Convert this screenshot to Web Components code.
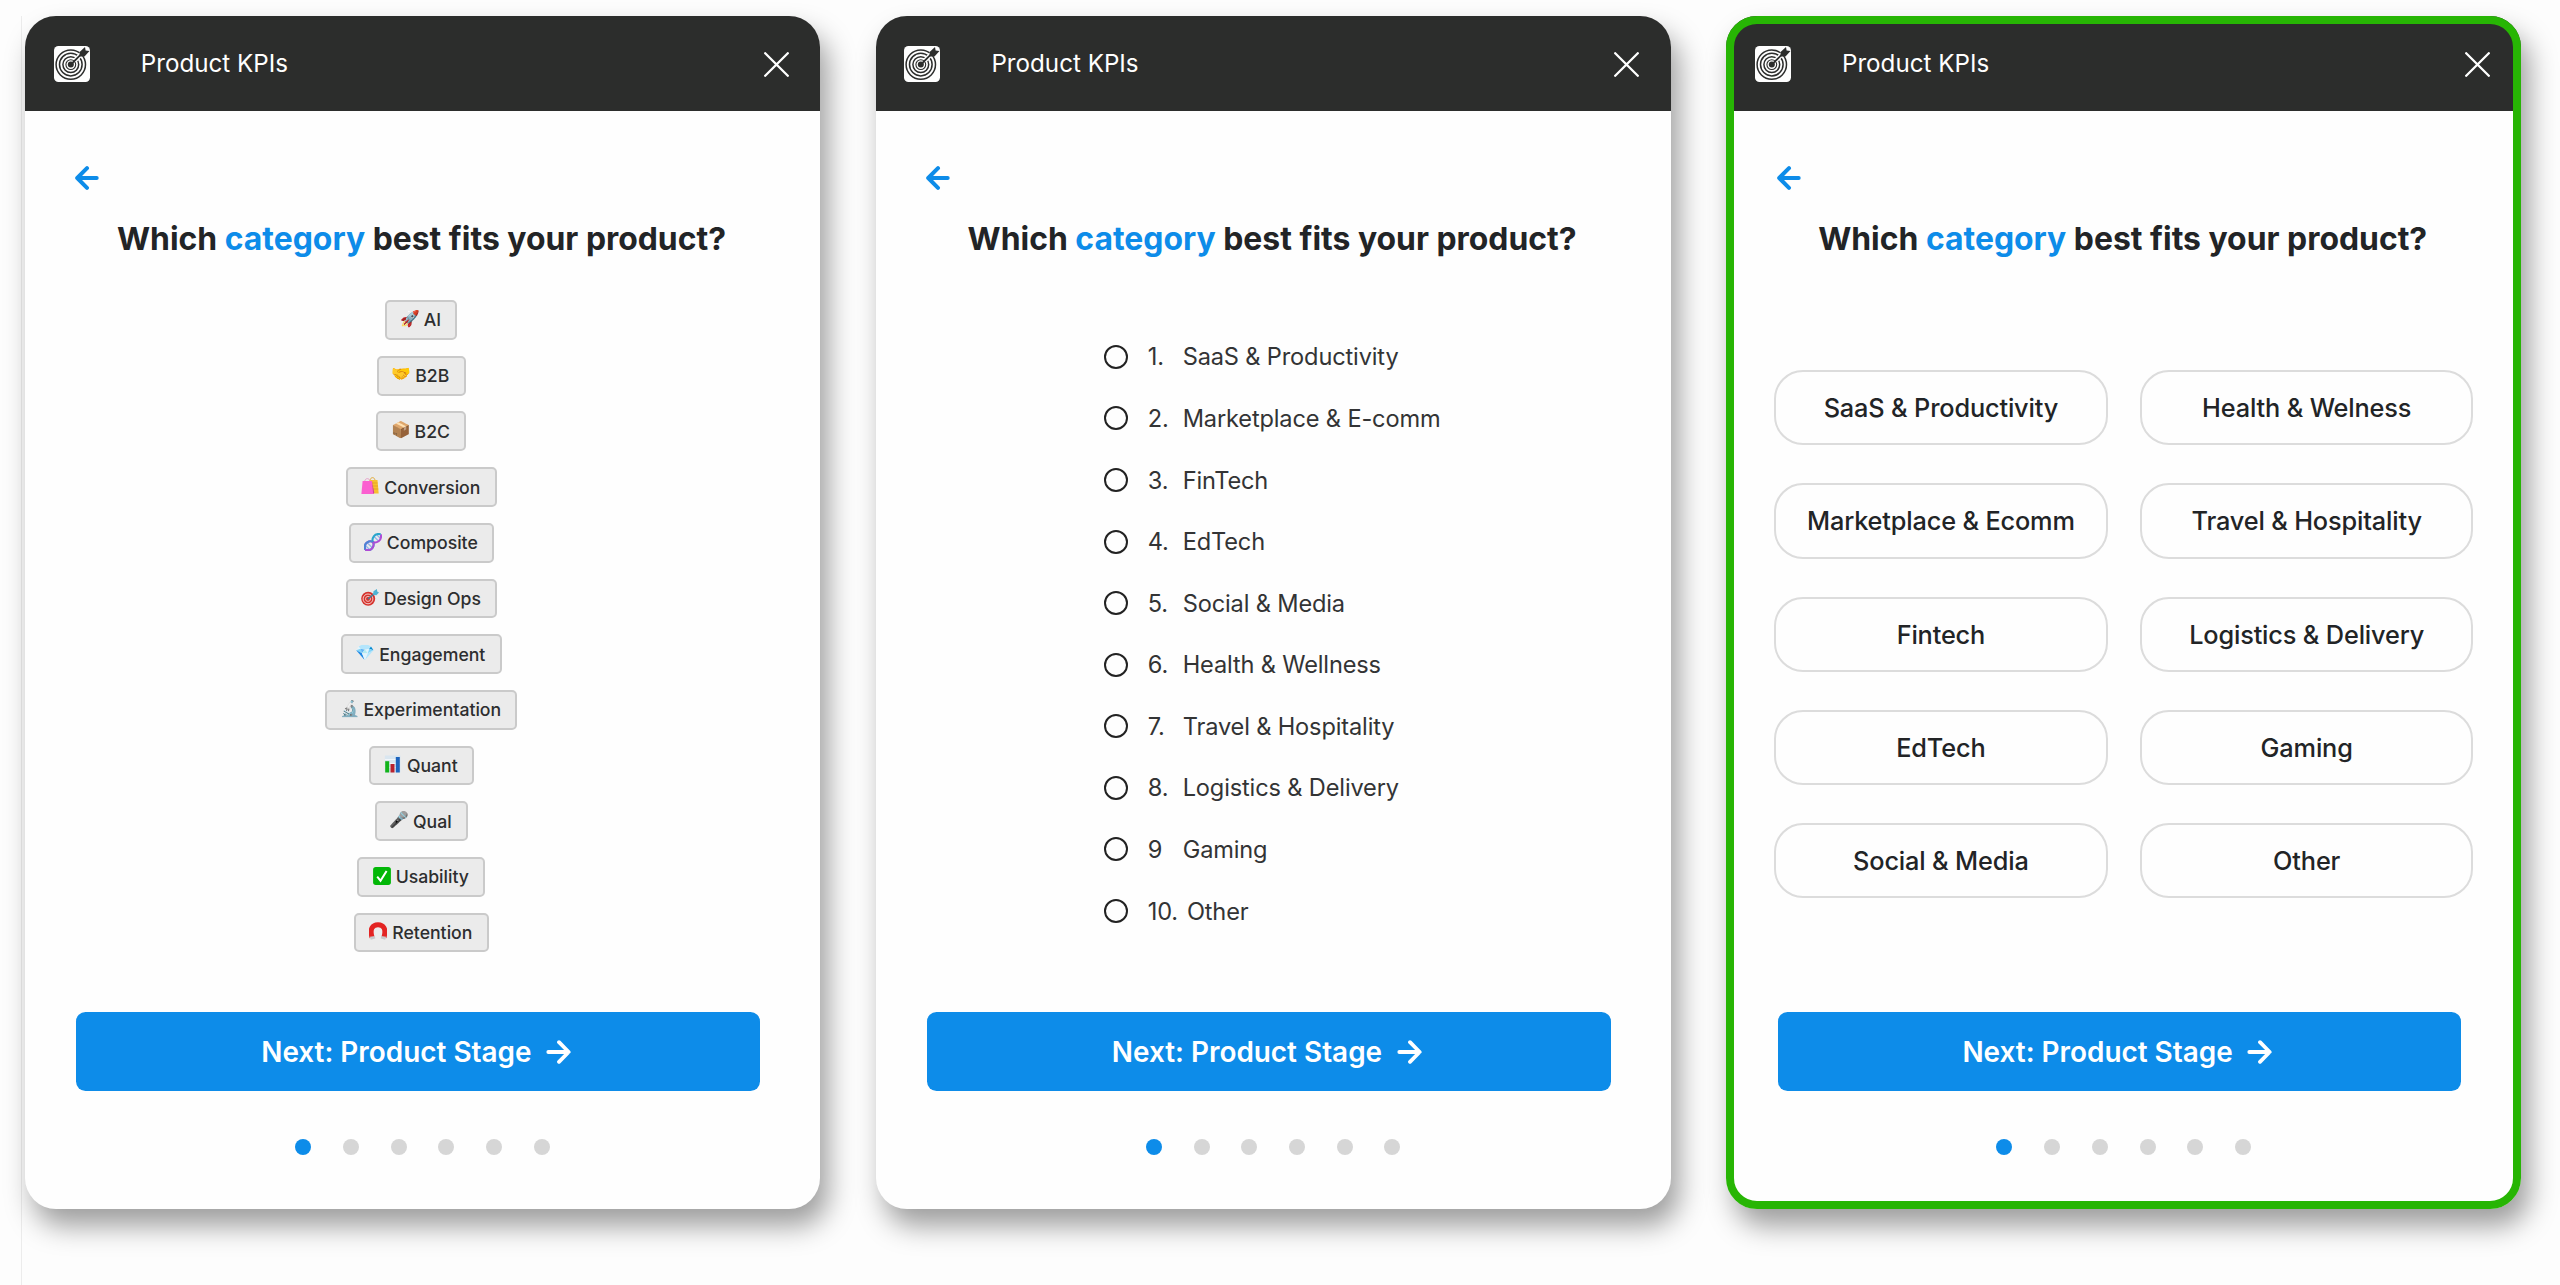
<!DOCTYPE html>
<html lang="en">
<head>
<meta charset="utf-8">
<title>Product KPIs</title>
<style>
  body {
    margin: 0;
    height: 1285px;
    overflow: hidden;
    background: #fdfdfd;
    font-family: Inter, "Liberation Sans", sans-serif;
    color: #222426;
  }
</style>
</head>
<body>
<kpi-board>
  <kpi-window>
    <kpi-chips>
      <kpi-chip label="AI" emoji="🚀"></kpi-chip>
      <kpi-chip label="B2B" emoji="🤝"></kpi-chip>
      <kpi-chip label="B2C" emoji="📦"></kpi-chip>
      <kpi-chip label="Conversion" icon="bags"></kpi-chip>
      <kpi-chip label="Composite" icon="dna"></kpi-chip>
      <kpi-chip label="Design Ops" icon="target"></kpi-chip>
      <kpi-chip label="Engagement" emoji="💎"></kpi-chip>
      <kpi-chip label="Experimentation" emoji="🔬"></kpi-chip>
      <kpi-chip label="Quant" icon="chart"></kpi-chip>
      <kpi-chip label="Qual" emoji="🎤"></kpi-chip>
      <kpi-chip label="Usability" icon="check"></kpi-chip>
      <kpi-chip label="Retention" icon="magnet"></kpi-chip>
    </kpi-chips>
  </kpi-window>

  <kpi-window>
    <kpi-radios>
      <kpi-radio number="1.">SaaS &amp; Productivity</kpi-radio>
      <kpi-radio number="2.">Marketplace &amp; E-comm</kpi-radio>
      <kpi-radio number="3.">FinTech</kpi-radio>
      <kpi-radio number="4.">EdTech</kpi-radio>
      <kpi-radio number="5.">Social &amp; Media</kpi-radio>
      <kpi-radio number="6.">Health &amp; Wellness</kpi-radio>
      <kpi-radio number="7.">Travel &amp; Hospitality</kpi-radio>
      <kpi-radio number="8.">Logistics &amp; Delivery</kpi-radio>
      <kpi-radio number="9">Gaming</kpi-radio>
      <kpi-radio number="10.">Other</kpi-radio>
    </kpi-radios>
  </kpi-window>

  <kpi-window selected>
    <kpi-pills>
      <kpi-pill>SaaS &amp; Productivity</kpi-pill>
      <kpi-pill>Health &amp; Welness</kpi-pill>
      <kpi-pill>Marketplace &amp; Ecomm</kpi-pill>
      <kpi-pill>Travel &amp; Hospitality</kpi-pill>
      <kpi-pill>Fintech</kpi-pill>
      <kpi-pill>Logistics &amp; Delivery</kpi-pill>
      <kpi-pill>EdTech</kpi-pill>
      <kpi-pill>Gaming</kpi-pill>
      <kpi-pill>Social &amp; Media</kpi-pill>
      <kpi-pill>Other</kpi-pill>
    </kpi-pills>
  </kpi-window>
</kpi-board>

<script>
/** Small base class: puts getTemplate() into an open shadow root */
class KpiElement extends HTMLElement {
  constructor() {
    super();
    this.attachShadow({ mode: 'open' });
  }

  connectedCallback() {
    const template = document.createElement('template');
    template.innerHTML = this.getTemplate();
    this.shadowRoot.replaceChildren(template.content.cloneNode(true));
  }
}

class KpiBoard extends KpiElement {
  getTemplate() {
    return `
      <style>
        :host {
          display: flex;
          gap: 55.6px;
          box-sizing: border-box;
          height: 1269px;
          margin: 16px 0 0 21px;
          padding-left: 3px;
          border-left: 1px solid #ececec;
        }
      </style>
      <slot></slot>
    `;
  }
}

/** One onboarding window: header, question, slotted answers, footer */
class KpiWindow extends KpiElement {
  getTemplate() {
    return `
      <style>
        :host {
          display: flex;
          flex: none;
          flex-direction: column;
          position: relative;
          width: 795px;
          height: 1192.5px;
          border-radius: 31px;
          background: #fefefe;
          box-shadow: 8px 17px 28px rgba(0, 0, 0, 0.38);
        }

        /* Selection ring lies over the header, so nothing shifts */
        :host([selected])::after {
          content: "";
          position: absolute;
          inset: 0;
          border: 8px solid #27b504;
          border-radius: 31px;
          pointer-events: none;
        }

        .body {
          flex: 1;
          display: flex;
          flex-direction: column;
          padding-top: 54.4px;
        }

        .back {
          display: block;
          width: 24px;
          height: 24px;
          margin-left: 50.4px;
        }

        h1 {
          margin: 33.4px 2px 0 0;
          font-size: 31.9px;
          line-height: 32px;
          font-weight: 700;
          text-align: center;
        }

        h1 span {
          color: #0d8ce9;
        }

        .answers {
          flex: 1;
        }

        kpi-next {
          margin-left: 51.4px;
        }

        kpi-dots {
          margin: 47.5px 0 53.8px;
        }
      </style>
      <kpi-header></kpi-header>
      <div class="body">
        <svg class="back" viewBox="0 0 24 24" fill="none" stroke="#0d8ce9" stroke-width="4" stroke-linecap="round" stroke-linejoin="round">
          <path d="M21.7 12H2.2M12 2.2 2.2 12l9.8 9.8"/>
        </svg>
        <h1>Which <span>category</span> best fits your product?</h1>
        <div class="answers"><slot></slot></div>
        <kpi-next></kpi-next>
        <kpi-dots count="6"></kpi-dots>
      </div>
    `;
  }
}

class KpiHeader extends KpiElement {
  getTemplate() {
    return `
      <style>
        :host {
          display: flex;
          align-items: center;
          box-sizing: border-box;
          height: 95.3px;
          padding: 1.6px 31.2px 0 28.6px;
          border-radius: 31px 31px 0 0;
          background: #2c2d2c;
          color: #fff;
          font-size: 24.2px;
          line-height: 30px;
        }

        .title {
          flex: 1;
          margin-left: 51.2px;
        }

        svg {
          flex: none;
        }
      </style>
      <svg width="36" height="36" viewBox="0 0 36 36" fill="none" stroke="#2c2d2c">
        <rect width="36" height="36" rx="4.5" fill="#fefefe" stroke="none"/>
        <circle cx="16.8" cy="18.6" r="14.7" stroke-width="1.5"/>
        <circle cx="16.8" cy="18.6" r="11.3" stroke-width="1.5"/>
        <circle cx="16.8" cy="18.6" r="7.9" stroke-width="1.5"/>
        <circle cx="16.8" cy="18.6" r="4.9" stroke-width="1.1"/>
        <circle cx="16.8" cy="18.6" r="3" fill="#2c2d2c" stroke="none"/>
        <path d="M20.5 14.9 32 3.4" stroke="#fefefe" stroke-width="4.4"/>
        <path d="M16.8 18.6 30 5.4" stroke-width="1.8"/>
        <path d="M25.6 10.400V6L31 .9l.6 3.700 3.900.4-5 5.400Z" fill="#2c2d2c" stroke="none"/>
      </svg>
      <span class="title">Product KPIs</span>
      <svg width="25" height="25" viewBox="0 0 25 25" fill="none" stroke="#fff" stroke-width="2.3" stroke-linecap="round">
        <path d="M1.2 1.2 23.8 23.8M23.8 1.2 1.2 23.8"/>
      </svg>
    `;
  }
}

class KpiNext extends KpiElement {
  getTemplate() {
    return `
      <style>
        :host {
          display: flex;
          align-items: center;
          justify-content: center;
          gap: 14.5px;
          box-sizing: border-box;
          width: 683.8px;
          height: 79.6px;
          padding: 1px 4.4px 0 0;
          border-radius: 9.5px;
          background: #0d8ce9;
          color: #fff;
          font-size: 27.9px;
          line-height: 34px;
          font-weight: 600;
        }
      </style>
      <span>Next: Product Stage</span>
      <svg width="25" height="24" viewBox="0 0 25 24" fill="none" stroke="#fff" stroke-width="3.8" stroke-linecap="round" stroke-linejoin="round">
        <path d="M2.3 12H22.5M13 2.2 22.7 12 13 21.8"/>
      </svg>
    `;
  }
}

class KpiDots extends KpiElement {
  getTemplate() {
    const count = Number(this.getAttribute('count'));
    return `
      <style>
        :host {
          display: flex;
          justify-content: center;
          gap: 31.7px;
        }

        i {
          width: 16px;
          height: 16px;
          border-radius: 50%;
          background: #d6d6d6;
        }

        i:first-of-type {
          background: #0d8ce9;
        }
      </style>
      ${'<i></i>'.repeat(count)}
    `;
  }
}

class KpiChips extends KpiElement {
  getTemplate() {
    return `
      <style>
        :host {
          display: flex;
          flex-direction: column;
          align-items: center;
          gap: 15.9px;
          padding: 45px 2.4px 0 0;
        }
      </style>
      <slot></slot>
    `;
  }
}

// Pictures for the chips that do not use an emoji glyph
const CHIP_ICONS = {
  bags: `
    <path d="M9 3.2c.6-3.4 4.6-3.4 5 0" fill="none" stroke="#e0a52a" stroke-width=".9"/>
    <path d="M8.3 3h8.2l1.2 13.4H9Z" fill="#f7c02f"/>
    <path d="M9.5 6h7M9.5 9h7.5M10 12h7.3" stroke="#dd9a20" stroke-width=".7"/>
    <path d="M3.6 4.6c.6-4 5-4 5.4 0" fill="none" stroke="#e79ac8" stroke-width=".9"/>
    <path d="M1.6 4h9.3l1.3 13H.4Z" fill="#fb5fd0"/>
    <path d="m10.9 4 2.4 12-1.1 1Z" fill="#c93aa4"/>`,
  dna: `
    <path d="M3 9.5 8.500 15M1.500 12.500l4 4M9.500 3l5.500 5.500M12.500 1.500l4 4" stroke="#8fb4ea" stroke-width="1.200"/>
    <path d="M1.300 16.700C-1 9 6 7.500 9 9s9.500-1 7.700-7.700" fill="none" stroke="#b04ad6" stroke-width="2"/>
    <path d="M1.300 16.700C9 19 10.500 12 9 9s1-9.500 7.700-7.700" fill="none" stroke="#2aa6cc" stroke-width="2"/>
    <path d="M1.300 16.700C-1 9 6 7.500 9 9" fill="none" stroke="#4a86d4" stroke-width="2"/>
    <path d="M1.300 16.700C9 19 10.500 12 9 9" fill="none" stroke="#b04ad6" stroke-width="2"/>`,
  target: `
    <circle cx="7.2" cy="10.8" r="7" fill="#d5322c"/>
    <circle cx="7" cy="10.9" r="4.900" fill="none" stroke="#f6dcd9" stroke-width=".9"/>
    <circle cx="7" cy="10.9" r="2.500" fill="none" stroke="#f6dcd9" stroke-width=".8"/>
    <path d="M7 11 14 5.2" stroke="#3c7f99" stroke-width="1.3"/>
    <path d="m12 6.800.5-3.500 3.400-2.300.3 2.400 1.800 1-2.600 2.800Z" fill="#4fb3d3"/>`,
  chart: `
    <rect x=".8" y=".5" width="15.7" height="17" fill="#d9e6f0"/>
    <path d="M1 4.5h15M1 8.5h15M1 12.5h15" stroke="#f7fafc" stroke-width=".8"/>
    <rect x="1.2" y="6.2" width="4" height="11.3" fill="#12b31b"/>
    <rect x="6.5" y="9" width="4" height="8.5" fill="#b9222e"/>
    <rect x="11.8" y="2" width="4" height="15.5" fill="#1c63bd"/>`,
  check: `
    <rect x=".1" y=".1" width="17.8" height="17.8" rx="2.7" fill="#02b707"/>
    <path d="m4.2 9.7 3.3 4L13.6 4" fill="none" stroke="#fff" stroke-width="2"/>`,
  magnet: `
    <path d="M3.1 15.5C.5 7 3.5 2.7 9 2.7S17.5 7 14.9 15.5" fill="none" stroke="#e32322" stroke-width="5"/>
    <path d="m.9 14.800 5-.9.4 2.600-4.500 1.300ZM17.100 14.800l-5-.9-.4 2.600 4.500 1.300Z" fill="#c9c9cb"/>`
};

class KpiChip extends KpiElement {
  getTemplate() {
    const icon = CHIP_ICONS[this.getAttribute('icon')];
    const picture = icon
      ? `<svg width="18" height="18" viewBox="0 0 18 18">${icon}</svg>`
      : this.getAttribute('emoji');
    return `
      <style>
        :host {
          display: flex;
          align-items: center;
          gap: 4.8px;
          box-sizing: border-box;
          height: 39.8px;
          padding: 0 14.2px 0 13.4px;
          border: 2px solid #cacaca;
          border-radius: 5px;
          background: #ebebeb;
          color: #2d2e2f;
          font-size: 17.65px;
          line-height: 22px;
          font-weight: 450;
        }

        .picture {
          display: flex;
          justify-content: center;
          width: 18px;
          padding-bottom: 2.4px;
          font-size: 15.8px;
          line-height: 18px;
        }

        .label {
          padding-top: 1px;
        }

        svg {
          display: block;
        }
      </style>
      <span class="picture">${picture}</span>
      <span class="label">${this.getAttribute('label')}</span>
    `;
  }
}

class KpiRadios extends KpiElement {
  getTemplate() {
    return `
      <style>
        :host {
          display: flex;
          flex-direction: column;
          padding: 71px 0 0 228.4px;
        }
      </style>
      <slot></slot>
    `;
  }
}

class KpiRadio extends KpiElement {
  getTemplate() {
    return `
      <style>
        :host {
          display: flex;
          align-items: center;
          height: 61.58px;
          color: #333435;
          font-size: 23.6px;
          line-height: 28px;
          letter-spacing: -0.15px;
        }

        .circle {
          box-sizing: border-box;
          width: 24px;
          height: 24px;
          border: 2px solid #222;
          border-radius: 50%;
          margin-right: 19.8px;
        }

        .number,
        .label {
          padding-top: 1px;
        }

        .number {
          min-width: 26px;
          margin-right: 8.9px;
        }
      </style>
      <span class="circle"></span>
      <span class="number">${this.getAttribute('number')}</span>
      <span class="label"><slot></slot></span>
    `;
  }
}

class KpiPills extends KpiElement {
  getTemplate() {
    return `
      <style>
        :host {
          display: grid;
          grid-template-columns: 333.4px 333.4px;
          grid-auto-rows: 75.2px;
          gap: 38.1px 32.4px;
          padding: 115px 0 0 48px;
        }
      </style>
      <slot></slot>
    `;
  }
}

class KpiPill extends KpiElement {
  getTemplate() {
    return `
      <style>
        :host {
          display: flex;
          align-items: center;
          justify-content: center;
          padding-top: 1px;
          border: 2px solid #dcdcdc;
          border-radius: 29px;
          font-size: 25.3px;
          line-height: 30px;
          font-weight: 450;
          letter-spacing: -0.15px;
        }
      </style>
      <slot></slot>
    `;
  }
}

customElements.define('kpi-board', KpiBoard);
customElements.define('kpi-window', KpiWindow);
customElements.define('kpi-header', KpiHeader);
customElements.define('kpi-next', KpiNext);
customElements.define('kpi-dots', KpiDots);
customElements.define('kpi-chips', KpiChips);
customElements.define('kpi-chip', KpiChip);
customElements.define('kpi-radios', KpiRadios);
customElements.define('kpi-radio', KpiRadio);
customElements.define('kpi-pills', KpiPills);
customElements.define('kpi-pill', KpiPill);
</script>
</body>
</html>
